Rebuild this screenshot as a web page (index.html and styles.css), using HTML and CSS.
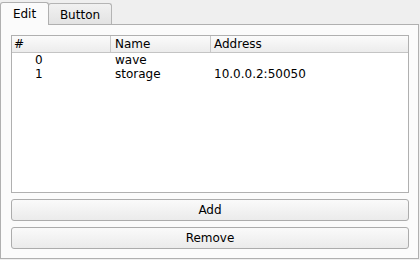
FILE: index.html
```html
<!DOCTYPE html>
<html>
<head>
<meta charset="utf-8">
<link rel="stylesheet" href="styles.css">
</head>
<body>
<div class="window">
  <div class="tabs">
    <div class="tab active">Edit</div>
    <div class="tab">Button</div>
  </div>
  <div class="pane">
    <div class="table">
      <div class="header">
        <div class="hcell">#</div>
        <div class="hcell">Name</div>
        <div class="hcell last">Address</div>
      </div>
      <div class="row">
        <div class="cell num">0</div>
        <div class="cell">wave</div>
        <div class="cell"></div>
      </div>
      <div class="row">
        <div class="cell num">1</div>
        <div class="cell">storage</div>
        <div class="cell">10.0.0.2:50050</div>
      </div>
    </div>
    <button class="btn">Add</button>
    <button class="btn">Remove</button>
  </div>
</div>
</body>
</html>
```

FILE: styles.css
```css
html, body {
  margin: 0;
  padding: 0;
  background: #efefef;
}
body {
  font-family: "DejaVu Sans", sans-serif;
  font-size: 12px;
  color: #000;
  width: 420px;
  height: 260px;
  overflow: hidden;
}
.window {
  display: flex;
  flex-direction: column;
}
.tabs {
  display: flex;
  align-items: flex-start;
  height: 25px;
  position: relative;
  z-index: 2;
}
.tab {
  box-sizing: border-box;
  border: 1px solid #b4b4b4;
  border-bottom: none;
  border-radius: 3px 3px 0 0;
  background: linear-gradient(#f1f1f1, #e3e3e3);
  margin-top: 3px;
  height: 21px;
  width: 64px;
  margin-left: -1px;
  display: flex;
  align-items: center;
  justify-content: center;
  line-height: 14px;
  padding-top: 1px;
}
.tab.active {
  margin-left: 0;
  margin-top: 2px;
  height: 23px;
  width: 49px;
  background: #fbfbfb;
  border-color: #b0b0b0;
  position: relative;
  z-index: 1;
  padding-top: 0;
  padding-bottom: 1px;
}
.pane {
  box-sizing: border-box;
  margin-top: -1px;
  width: 419px;
  height: 235px;
  border: 1px solid #b0b0b0;
  background: #fbfbfb;
  padding: 10px 9px 9px 10px;
  display: flex;
  flex-direction: column;
  gap: 6px;
}
.table {
  flex: 1;
  border: 1px solid #b0b0b0;
  background: #fff;
}
.header {
  display: grid;
  grid-template-columns: 99px 100px 1fr;
  height: 17px;
  box-sizing: border-box;
  border-bottom: 1px solid #c4c4c4;
  background: linear-gradient(#fbfbfb, #ececec);
}
.hcell {
  border-right: 1px solid #c8c8c8;
  padding-left: 2px;
  line-height: 16px;
}
.hcell:nth-child(2) { padding-left: 4px; }
.hcell.last { border-right: none; padding-left: 3px; }
.row {
  display: grid;
  grid-template-columns: 99px 100px 1fr;
  height: 14px;
  line-height: 14px;
}
.cell { padding-left: 3px; white-space: nowrap; }
.cell:nth-child(2) { padding-left: 4px; }
.cell:nth-child(3) { padding-left: 3px; }
.cell.num { padding-left: 23px; }
.btn {
  box-sizing: border-box;
  height: 22px;
  width: 100%;
  border: 1px solid #acacac;
  border-radius: 3px;
  background: linear-gradient(#fafafa, #ebebeb);
  font-family: "DejaVu Sans", sans-serif;
  font-size: 12px;
  color: #000;
  padding: 0;
  margin: 0;
  line-height: 20px;
}
```
